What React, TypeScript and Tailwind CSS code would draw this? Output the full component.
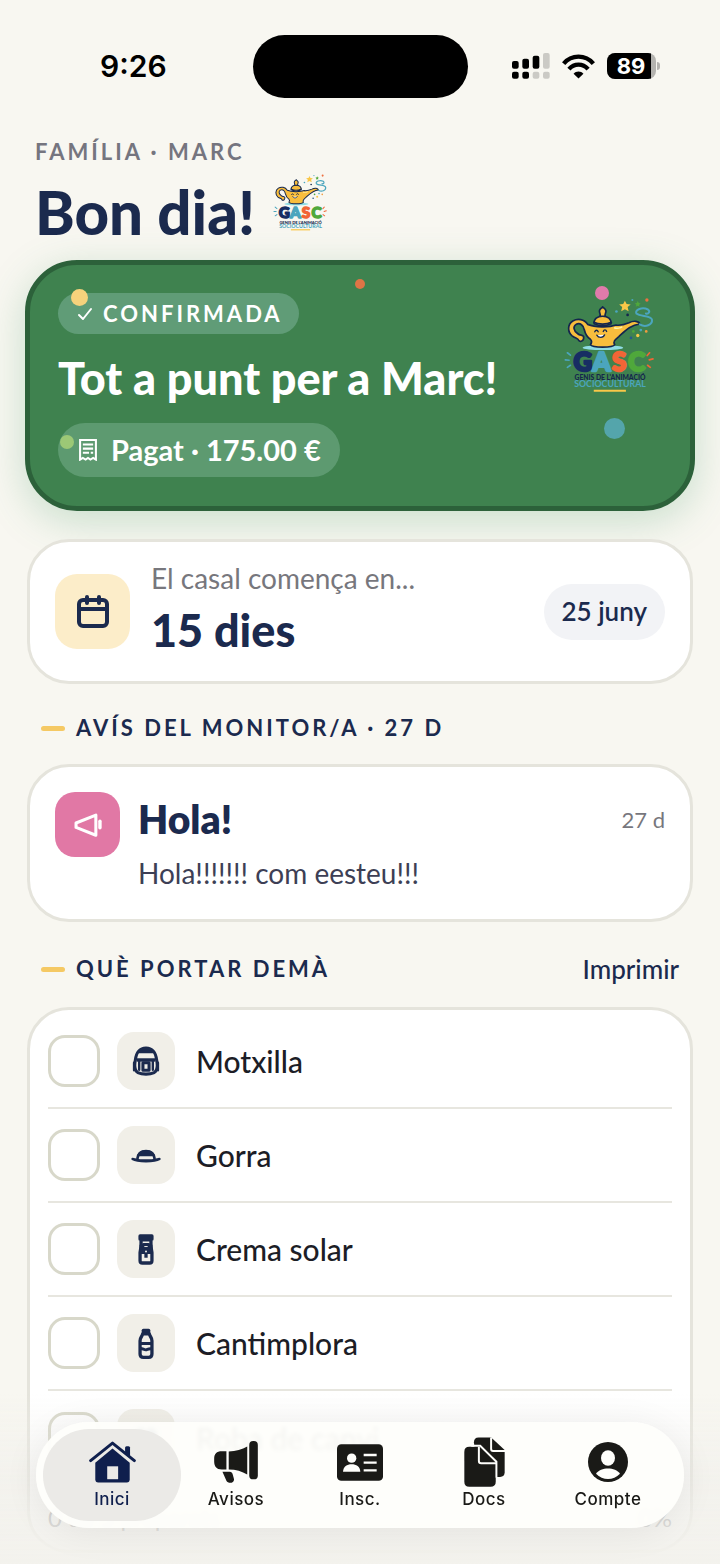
import type { ReactNode } from "react";

type PackItem = { id: string; label: string; icon: ReactNode };
type Tab = { label: string; href: string; icon: ReactNode; active?: boolean };

function GascLogo({ className }: { className: string }) {
  return (
    <svg viewBox="48 56 266 282" className={className} role="img" aria-label="GASC">
      {/* Lamp */}
      <ellipse cx="163" cy="205" rx="60" ry="7" fill="#8fdce4" />
      <g stroke="#14264d" strokeWidth="5" strokeLinejoin="round" strokeLinecap="round">
        <path
          fill="#f8bd3d"
          fillRule="evenodd"
          d="M118 136C108 120 88 118 74 126C58 136 58 158 72 170C82 178 90 176 92 184C96 190 108 184 106 172C103 166 96 170 88 163C76 154 74 142 84 136C96 130 106 140 108 152C111 164 116 174 126 180C130 184 132 188 126 196C132 206 192 206 198 196C192 188 198 182 210 172C228 156 244 138 272 135C270 126 254 124 240 131C226 137 214 140 202 138C180 146 140 145 118 136Z"
        />
        <path fill="#f8bd3d" d="M137 134C136 120 146 112 162 112C178 112 188 120 187 134C172 141 152 141 137 134Z" />
        <path fill="#f8bd3d" d="M154 112C158 106 151 102 153 95C155 89 160 88 162 84C166 88 171 90 172 96C173 102 167 106 170 112Z" />
        <path fill="none" d="M136 130C150 137 174 137 188 130" />
        <path fill="none" strokeWidth="4" d="M139 158c2-6 8-6 10 0M164 157c2-6 8-6 10 0" />
        <path fill="#fff" strokeWidth="4" d="M145 168c5 9 19 9 23-1" />
      </g>
      <path d="M196 146c8 3 20 1 24-3" stroke="#fff2a8" strokeWidth="4" fill="none" />
      {/* Smoke and sparks */}
      <path
        d="M272 136c16 10 38 2 36-14c-3-14-34-8-46-18c-6-12 18-20 34-12c8 6 2 14-6 12"
        fill="none"
        stroke="#4ba5bd"
        strokeWidth="6"
        strokeLinecap="round"
      />
      <path d="M228 66l5 10 12 1-9 8 3 12-11-6-11 6 3-12-9-8 12-1z" fill="#f9c748" />
      <path d="M266 67l3 6 6 1-5 4 1 6-5-3-6 3 2-6-5-4 6-1z" fill="#4fa83b" />
      <circle cx="293" cy="64" r="5" fill="#ee7040" />
      <circle cx="250" cy="64" r="3" fill="#4ba5bd" />
      <circle cx="236" cy="108" r="4" fill="#14264d" />
      <circle cx="203" cy="98" r="4" fill="#4ba5bd" />
      <circle cx="266" cy="169" r="5" fill="#f9c748" />
      <circle cx="291" cy="157" r="4" fill="#ee9b40" />
      <circle cx="246" cy="176" r="4" fill="#27588b" />
      <circle cx="253" cy="157" r="4" fill="#4fa83b" />
      <circle cx="275" cy="153" r="4" fill="#4ba5bd" />
      {/* Wordmark */}
      <g fontFamily="Lato, sans-serif" fontWeight="900">
        <g fontSize="76" strokeWidth="7" strokeLinejoin="round">
          <text x="76" y="274" fill="#172d63" stroke="#172d63">G</text>
          <text x="132" y="274" fill="#4ba5bd" stroke="#4ba5bd">A</text>
          <text x="190" y="274" fill="#f26536" stroke="#f26536">S</text>
          <text x="238" y="274" fill="#4fa83b" stroke="#4fa83b">C</text>
        </g>
        <text x="184" y="301" textAnchor="middle" fontSize="20" fill="#14264d">GENIS DE L'ANIMACIÓ</text>
        <text x="184" y="322" textAnchor="middle" fontSize="26" fontWeight="700" fill="#4ba5bd">SOCIOCULTURAL</text>
      </g>
      <path d="M136 332h95" stroke="#f9c748" strokeWidth="6" />
      <g strokeWidth="5" strokeLinecap="round">
        <path stroke="#4ba5bd" d="M58 220l9 7M52 241l11 1M58 263l9-6" />
        <path stroke="#f26536" d="M301 220l-7 8M311 238l-11 3M303 263l-8-6" />
      </g>
    </svg>
  );
}

const packing: PackItem[] = [
  {
    id: "motxilla",
    label: "Motxilla",
    icon: (
      <svg viewBox="336 146 82 88" className="h-[30px] w-[28px]" fill="none" stroke="#1b2a4e" strokeWidth="9" strokeLinejoin="round">
        <path d="M353 224C344 218 342 205 346 186C349 163 358 153 377 152C396 153 405 163 408 186C412 205 410 218 401 224C388 230 366 230 353 224z" />
        <path d="M354 164c10-14 36-14 46 0z" fill="#1b2a4e" strokeWidth="6" />
        <path d="M350 187h54" strokeWidth="10" />
        <rect x="368" y="195" width="18" height="22" strokeWidth="9" />
        <path d="M357 192v24M397 192v24M342 195v22M412 195v22" strokeWidth="7" strokeLinecap="round" />
      </svg>
    ),
  },
  {
    id: "gorra",
    label: "Gorra",
    icon: (
      <svg viewBox="332 430 90 90" className="h-[30px] w-[30px]" fill="none" stroke="#1b2a4e" strokeWidth="8" strokeLinejoin="round">
        <path d="M351 487c2-18 12-24 26-24s24 6 26 24" />
        <path d="M355 475c8-14 36-14 44 0z" fill="#1b2a4e" />
        <path d="M337 487c14 9 66 9 80 0c-10 2-16 5-40 5s-30-3-40-5z" fill="#1b2a4e" />
      </svg>
    ),
  },
  {
    id: "crema",
    label: "Crema solar",
    icon: (
      <svg viewBox="332 704 90 94" className="h-[31px] w-[30px]" fill="none" stroke="#1b2a4e" strokeWidth="10" strokeLinejoin="round">
        <path d="M359 710h36v10h-36zM362 722h30v20l3 18v25c0 4-2 7-7 7h-22c-5 0-7-3-7-7v-25l3-18z" />
        <path d="M362 740l9-4h12l9 4v20h-30z" fill="#1b2a4e" />
        <path d="M377 764v12" />
        <circle cx="377" cy="757" r="3" fill="#f1efe8" stroke="none" />
        <path d="M372 742h10" stroke="#f1efe8" strokeWidth="3" />
      </svg>
    ),
  },
  {
    id: "cantimplora",
    label: "Cantimplora",
    icon: (
      <svg viewBox="332 986 90 94" className="h-[31px] w-[30px]" fill="none" stroke="#1b2a4e" strokeWidth="10" strokeLinejoin="round">
        <path d="M369 993h16v9h-16z" />
        <path d="M367 1004c-2 9-8 10-8 21v40c0 7 4 10 10 10h16c6 0 10-3 10-10v-40c0-11-6-12-8-21z" />
        <path d="M358 1033h38M358 1049c7-3 14 5 20 3s10-5 18-2" strokeWidth="9" />
      </svg>
    ),
  },
  {
    id: "roba",
    label: "Roba de canvi",
    icon: (
      <svg viewBox="0 0 24 24" className="h-[28px] w-[28px]" fill="#1b2a4e">
        <path d="M8 3l-6 4 2 5 3-1v10h10V11l3 1 2-5-6-4c-1 3-7 3-8 0z" />
      </svg>
    ),
  },
];

const tabs: Tab[] = [
  {
    label: "Inici",
    href: "#inici",
    active: true,
    icon: (
      <svg viewBox="266 155 142 126" className="h-[42px] w-[47px]">
        <path d="M375 188v-14c0-5 15-5 15 0v29z" fill="#0f1f4d" />
        <path d="M271 214L337 161L403 214" fill="none" stroke="#0f1f4d" strokeWidth="9" strokeLinecap="round" strokeLinejoin="round" />
        <path d="M337 177l52 43v50c0 6-3 10-9 10h-86c-6 0-9-4-9-10v-50z" fill="#0f1f4d" />
        <path d="M321 231h33v39h-33z" fill="#ebeae7" />
      </svg>
    ),
  },
  {
    label: "Avisos",
    href: "#avisos",
    icon: (
      <svg viewBox="639 154 132 127" className="h-[42px] w-[44px]" fill="#1a1a17">
        <path d="M676 185v55h-14c-16 0-23-9-23-24v-8c0-15 7-23 23-23zM683 186c22 0 40-6 56-15v84c-16-9-34-15-56-15z" />
        <rect x="745" y="154" width="26" height="116" rx="12" />
        <path d="M664 247h22c6 0 8 4 10 11l3 12c1 12-18 14-23 4z" />
      </svg>
    ),
  },
  {
    label: "Insc.",
    href: "#inscripcio",
    icon: (
      <svg viewBox="0 0 138 110" className="h-[37px] w-[46px]">
        <rect width="138" height="110" rx="13" fill="#1a1a17" />
        <g fill="#fefefb">
          <circle cx="44" cy="42" r="14" />
          <path d="M18 83c1-17 12-23 26-23s25 6 26 23z" />
          <path d="M80 29h39v7H80zM80 52h39v7H80zM80 75h39v7H80z" />
        </g>
      </svg>
    ),
  },
  {
    label: "Docs",
    href: "#docs",
    icon: (
      <svg viewBox="312 142 124 150" className="h-[50px] w-[41px]">
        <path d="M342 157c0-9 5-14 14-14h38l41 38v68c0 8-5 13-14 13h-66z" fill="#1a1a17" />
        <path d="M394 143v35c0 4 2 6 6 6h36" fill="none" stroke="#fefefb" strokeWidth="6" />
        <path
          d="M313 186c0-10 5-15 15-15h31l49 48v58c0 10-5 15-15 15h-65c-10 0-15-5-15-15z"
          fill="#1a1a17"
        />
        <path d="M334 168h27l49 48v48" fill="none" stroke="#fefefb" strokeWidth="6" />
        <path d="M357 171v43c0 5 2 7 7 7h45" fill="none" stroke="#fefefb" strokeWidth="6" />
      </svg>
    ),
  },
  {
    label: "Compte",
    href: "#compte",
    icon: (
      <svg viewBox="0 0 120 120" className="h-[40px] w-[40px]">
        <circle cx="60" cy="60" r="60" fill="#1a1a17" />
        <ellipse cx="60" cy="48" rx="21" ry="23" fill="#fefefb" />
        <path d="M24 95c14-21 58-21 72 0c-20 21-52 21-72 0z" fill="#fefefb" />
      </svg>
    ),
  },
];

function StatusBar() {
  return (
    <div className="grid h-[132px] grid-cols-[1fr_auto_1fr] items-center font-['Inter',sans-serif] text-black">
      <span className="pl-[100px] text-[30px] font-semibold">9:26</span>
      <div className="h-[63px] w-[215px] rounded-full bg-black" />
      <div className="flex items-center justify-end gap-3 pr-[60px]">
        <svg viewBox="93 67 114 78" className="h-[26px] w-[38px]">
          <rect x="93" y="91" width="20" height="23" rx="6" />
          <rect x="124" y="84" width="20" height="30" rx="6" />
          <rect x="155" y="75" width="20" height="39" rx="6" />
          <rect x="186" y="67" width="20" height="47" rx="6" fill="#cbcac5" />
          <rect x="93" y="123" width="20" height="21" rx="6" />
          <rect x="124" y="123" width="20" height="21" rx="6" />
          <rect x="155" y="123" width="20" height="21" rx="6" fill="#cbcac5" />
          <rect x="186" y="123" width="20" height="21" rx="6" fill="#cbcac5" />
        </svg>
        <svg viewBox="244 68 100 74" className="h-[25px] w-[33px]" fill="none" stroke="black" strokeWidth="13">
          <path d="M249 96c24-28 66-28 90 0" />
          <path d="M265 113c16-18 42-18 58 0" />
          <path d="M279 127c8-9 22-9 30 0l-15 14z" fill="black" stroke="none" />
        </svg>
        <div className="flex items-center gap-[1px]">
          <div className="flex h-[26px] w-[49px] overflow-hidden rounded-[8px] bg-[#b4b3af]">
            <span className="w-[44px] bg-black pl-1 text-center text-[22px] leading-[26px] font-bold text-white">89</span>
          </div>
          <span className="h-[8px] w-[3px] rounded-r-full bg-[#b4b3af]" />
        </div>
      </div>
    </div>
  );
}

function SectionTitle({ children }: { children: ReactNode }) {
  return (
    <h2 className="flex items-center gap-[11px] text-[22px] leading-8 font-bold tracking-[3px] text-[#1b2a4e]">
      <span className="h-[5px] w-6 rounded-full bg-[#f5c964]" />
      {children}
    </h2>
  );
}

function HeroCard() {
  return (
    <section className="relative mx-[25px] mt-[10px] h-[251px] rounded-[52px] border-[5px] border-[#2c613a] bg-[#3f824f] px-7 pt-7 text-white shadow-[0_10px_40px_rgba(63,150,95,0.26)]">
      <div className="flex justify-between">
        <div className="flex flex-col items-start">
          <span className="flex h-[41px] items-center gap-[10px] rounded-full bg-[#609c77] pr-[16px] pl-[19px] text-[22px] font-bold tracking-[3px]">
            <svg viewBox="0 0 16 16" className="h-4 w-4" fill="none" stroke="currentColor" strokeWidth="2" strokeLinecap="round" strokeLinejoin="round">
              <path d="M2 9l4 4 8-10" />
            </svg>
            CONFIRMADA
          </span>
          <h2 className="mt-4 text-[45px] leading-[56px] font-black">Tot a punt per a Marc!</h2>
          <span className="mt-[17px] flex h-[54px] items-center gap-3 rounded-full bg-[#5d9a70] px-[19px] text-[29px] font-bold">
            <svg viewBox="241 568 54 64" className="h-[22px] w-[22px]" fill="none" stroke="currentColor" strokeWidth="6">
              <path d="M245 571h46v57l-8-5-8 5-7-5-7 5-8-5-8 5z" />
              <path d="M253 584h30M253 596h30M253 608h18M276 608h7" />
            </svg>
            Pagat · 175.00 €
          </span>
        </div>
        <GascLogo className="mt-1 mr-2 h-[96px] w-[90px]" />
      </div>
      {/* Confetti */}
      <span className="absolute top-6 left-[41px] h-[17px] w-[17px] rounded-full bg-[#f6d27c]" />
      <span className="absolute top-[14px] left-1/2 -ml-[5px] h-[10px] w-[10px] rounded-full bg-[#df7446]" />
      <span className="absolute top-[21px] right-[81px] h-[14px] w-[14px] rounded-full bg-[#e07bab]" />
      <span className="absolute top-[153px] right-[65px] h-[21px] w-[21px] rounded-full bg-[#54a5ab]" />
      <span className="absolute top-[170px] left-[30px] h-[14px] w-[14px] rounded-full bg-[#9cc876]" />
    </section>
  );
}

export default function App() {
  return (
    <div className="relative min-h-screen bg-[#f8f7f1] font-['Lato',sans-serif] text-[#1b2a4e]">
      <StatusBar />

      <header className="px-[35px] pt-1">
        <p className="text-[22px] leading-8 font-bold tracking-[3px] text-[#75757f]">FAMÍLIA · MARC</p>
        <div className="flex items-start gap-[18px] pt-[6px]">
          <h1 className="text-[60px] leading-[76px] font-black">Bon dia!</h1>
          <GascLogo className="h-[57px] w-[54px]" />
        </div>
      </header>

      <HeroCard />

      {/* Countdown */}
      <section className="relative mx-[27px] mt-7 flex h-[145px] items-center gap-[21px] rounded-[42px] border-[3px] border-[#e5e4dc] bg-white px-[25px]">
        <div className="flex h-[75px] w-[75px] items-center justify-center rounded-[22px] bg-[#fcedc9]">
          <svg viewBox="0 0 34 34" className="h-[34px] w-[34px]" fill="none" stroke="#1b2a4e" strokeWidth="4" strokeLinecap="round">
            <rect x="3" y="5" width="28" height="26" rx="4" />
            <path d="M3 14h28" />
            <path d="M11 2v6M23 2v6" />
          </svg>
        </div>
        <div className="flex-1">
          <p className="text-[28px] leading-9 text-[#77777d]">El casal comença en...</p>
          <p className="text-[45px] leading-[68px] font-black">15 dies</p>
        </div>
        <span className="flex h-14 items-center rounded-full bg-[#f2f3f6] px-[18px] text-[26px] font-semibold">25 juny</span>
      </section>

      <div className="mt-7 px-[41px]">
        <SectionTitle>AVÍS DEL MONITOR/A · 27 D</SectionTitle>
      </div>

      <article className="mx-[27px] mt-5 flex h-[158px] items-start gap-[18px] rounded-[42px] border-[3px] border-[#e5e4dc] bg-white px-[25px] pt-[25px]">
        <div className="flex h-[65px] w-[65px] items-center justify-center rounded-[20px] bg-[#e178a5]">
          <svg viewBox="217 851 82 70" className="h-[24px] w-[28px]" fill="none" stroke="white" strokeWidth="9" strokeLinejoin="round">
            <path d="M223 880L281 857V916L223 893z" />
            <path d="M293 875v19" strokeLinecap="round" strokeWidth="10" />
          </svg>
        </div>
        <div className="flex-1">
          <div className="flex items-center justify-between">
            <h3 className="text-[39px] leading-[54px] font-extrabold">Hola!</h3>
            <time className="text-[22px] text-[#77777d]">27 d</time>
          </div>
          <p className="text-[28px] leading-[54px] text-[#3d3f55]">Hola!!!!!!! com eesteu!!!</p>
        </div>
      </article>

      <div className="mt-[31px] flex items-center justify-between px-[41px]">
        <SectionTitle>QUÈ PORTAR DEMÀ</SectionTitle>
        <button type="button" className="text-[26px] leading-8 font-medium">
          Imprimir
        </button>
      </div>

      <section className="mx-[27px] mt-[22px] rounded-[42px] border-[3px] border-[#e5e4dc] bg-white px-[18px] pt-[5px]">
        <ul>
          {packing.map((item) => (
            <li key={item.id} className="flex h-[94px] items-center border-b-2 border-[#e7e6df] last:border-0">
              <input
                id={item.id}
                type="checkbox"
                className="h-[52px] w-[52px] shrink-0 appearance-none rounded-[17px] border-[3px] border-[#d8d8ca] bg-white checked:bg-[#3f824f]"
              />
              <label htmlFor={item.id} className="flex flex-1 items-center gap-[21px] pl-[17px] text-[30px] font-medium text-[#1c1d26]">
                <span className="flex h-[58px] w-[58px] items-center justify-center rounded-[17px] bg-[#f1efe8]">{item.icon}</span>
                {item.label}
              </label>
            </li>
          ))}
        </ul>
        <p className="flex h-[65px] items-center justify-between text-[24px] text-[#77777d]">
          <span>0 de 5 preparats</span>
          <span>0%</span>
        </p>
      </section>

      <div className="pointer-events-none fixed inset-x-0 bottom-0 h-[170px] bg-linear-to-b from-[#f0efeb]/0 via-[#f0efeb]/60 to-[#f3f2ed]" />

      <nav className="fixed inset-x-9 bottom-9 flex h-[106px] rounded-full bg-[#fefefb]/94 px-[14px] py-[7px] font-['Inter',sans-serif] shadow-[0_4px_36px_rgba(0,0,0,0.07)] backdrop-blur-[2px]">
        {tabs.map((tab) => (
          <a key={tab.label} href={tab.href} aria-current={tab.active ? "page" : undefined} className="relative flex flex-1 flex-col items-center pt-[8px]">
            {tab.active && <span className="absolute inset-y-0 -inset-x-[7px] rounded-full bg-[#ebeae7]" />}
            <span className="relative flex h-[50px] items-center">{tab.icon}</span>
            <span className={`relative text-[17px] leading-6 font-medium tracking-[0.5px] ${tab.active ? "text-[#0f1f4d]" : "text-[#1a1a17]"}`}>
              {tab.label}
            </span>
          </a>
        ))}
      </nav>
    </div>
  );
}
